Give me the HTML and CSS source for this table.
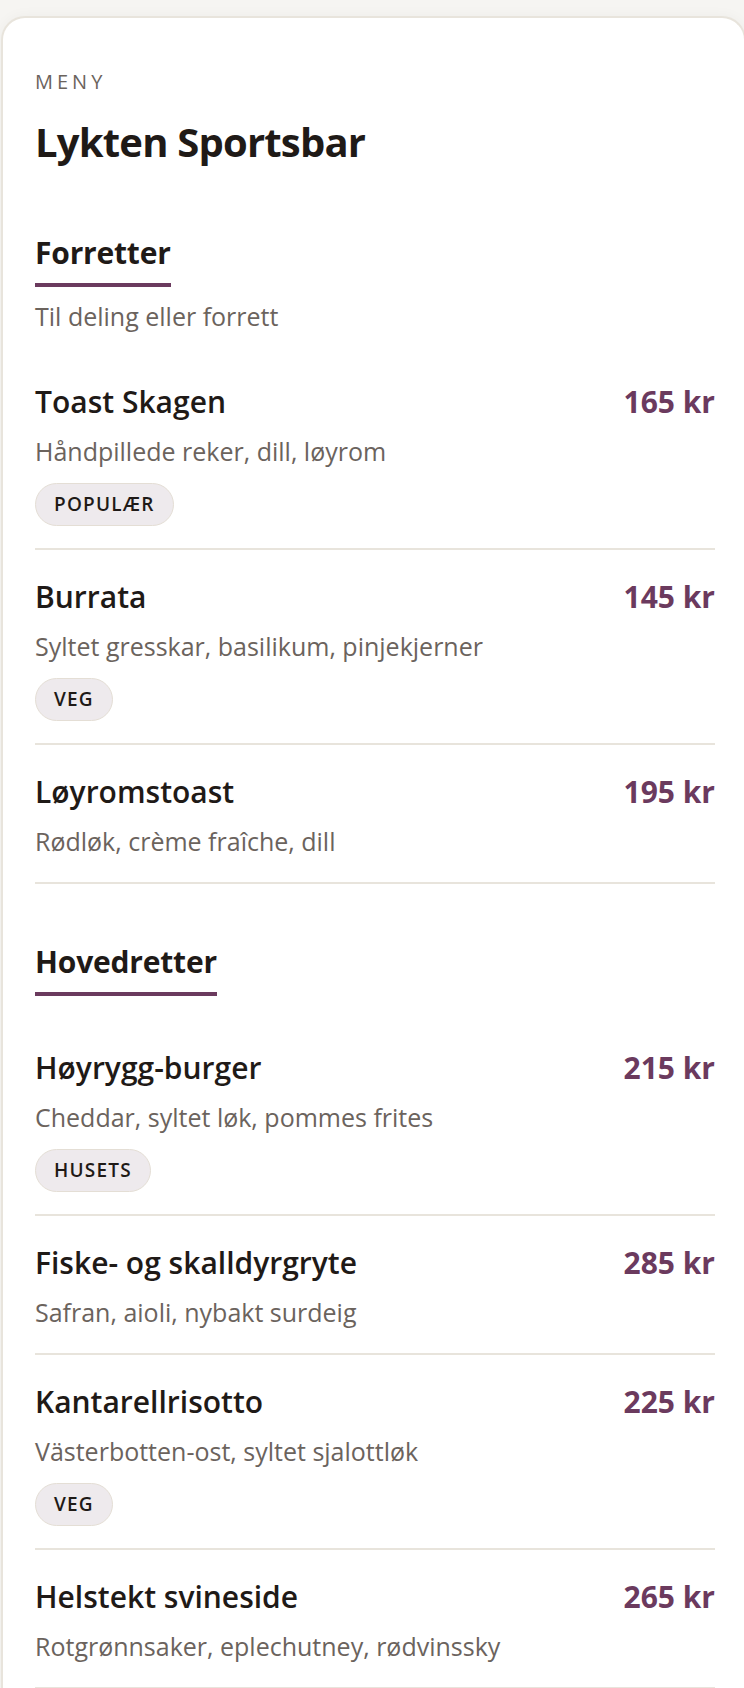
FILE: index.html
```html
<!DOCTYPE html>
<html lang="no">
<head>
    <meta charset="UTF-8">
    <meta name="viewport" content="width=device-width, initial-scale=1.0">
    <title>Meny - Lykten Sportsbar</title>
    <link rel="stylesheet" href="styles.css">
</head>
<body>

<div class="card">
    <div class="eyebrow">MENY</div>
    <h1>Lykten Sportsbar</h1>

    <section class="section">
        <div class="section-head">
            <h2>Forretter</h2>
            <p class="section-sub">Til deling eller forrett</p>
        </div>
        <div class="item">
            <div class="item-row">
                <span class="item-name">Toast Skagen</span>
                <span class="item-price">165 kr</span>
            </div>
            <p class="item-desc">Håndpillede reker, dill, løyrom</p>
            <span class="tag">POPULÆR</span>
        </div>
        <div class="item">
            <div class="item-row">
                <span class="item-name">Burrata</span>
                <span class="item-price">145 kr</span>
            </div>
            <p class="item-desc">Syltet gresskar, basilikum, pinjekjerner</p>
            <span class="tag">VEG</span>
        </div>
        <div class="item">
            <div class="item-row">
                <span class="item-name">Løyromstoast</span>
                <span class="item-price">195 kr</span>
            </div>
            <p class="item-desc">Rødløk, crème fraîche, dill</p>
        </div>
    </section>

    <section class="section">
        <div class="section-head">
            <h2>Hovedretter</h2>
        </div>
        <div class="item">
            <div class="item-row">
                <span class="item-name">Høyrygg-burger</span>
                <span class="item-price">215 kr</span>
            </div>
            <p class="item-desc">Cheddar, syltet løk, pommes frites</p>
            <span class="tag">HUSETS</span>
        </div>
        <div class="item">
            <div class="item-row">
                <span class="item-name">Fiske- og skalldyrgryte</span>
                <span class="item-price">285 kr</span>
            </div>
            <p class="item-desc">Safran, aioli, nybakt surdeig</p>
        </div>
        <div class="item">
            <div class="item-row">
                <span class="item-name">Kantarellrisotto</span>
                <span class="item-price">225 kr</span>
            </div>
            <p class="item-desc">Västerbotten-ost, syltet sjalottløk</p>
            <span class="tag">VEG</span>
        </div>
        <div class="item">
            <div class="item-row">
                <span class="item-name">Helstekt svineside</span>
                <span class="item-price">265 kr</span>
            </div>
            <p class="item-desc">Rotgrønnsaker, eplechutney, rødvinssky</p>
        </div>
    </section>
</div>

</body>
</html>
```

FILE: styles.css
```css
body {
    font-family: 'Open Sans', 'Noto Sans', sans-serif;
    background: #f6f5f2;
    color: #1f1a17;
    margin: 0;
    padding-top: 16px;
    overflow: hidden;
}
.card {
    width: 745px;
    box-sizing: border-box;
    margin-left: 1px;
    background: #fff;
    border: 2px solid #e8e4dc;
    border-bottom: none;
    border-radius: 24px 24px 0 0;
    box-shadow: 0 0 14px rgba(0, 0, 0, 0.04);
    padding: 52px 29px 0 32px;
}
.eyebrow {
    font-size: 20px;
    line-height: 24px;
    letter-spacing: 4px;
    color: #6b635d;
}
h1 {
    font-size: 40px;
    line-height: 50px;
    font-weight: 700;
    letter-spacing: -0.8px;
    margin: 23px 0 0;
}
.section {
    margin-top: 59px;
}
.section:first-of-type {
    margin-top: 67px;
}
.section-head {
    margin-bottom: 25px;
}
h2 {
    display: inline-block;
    font-size: 30px;
    line-height: 38px;
    font-weight: 700;
    letter-spacing: -0.2px;
    margin: 0;
    padding-bottom: 11px;
    border-bottom: 4px solid #6b3a5e;
}
.section-sub {
    font-size: 25px;
    line-height: 28px;
    color: #6b635d;
    margin: 15px 0 0;
}
.item {
    display: flex;
    flex-direction: column;
    align-items: flex-start;
    padding: 28px 0 25px;
    border-bottom: 2px solid #e8e4dc;
}
.item-row {
    align-self: stretch;
    display: flex;
    justify-content: space-between;
    align-items: baseline;
}
.item-name {
    font-size: 30px;
    line-height: 38px;
    font-weight: 600;
}
.item-price {
    font-size: 30px;
    line-height: 38px;
    font-weight: 700;
    color: #6b3a5e;
}
.item-desc {
    font-size: 25px;
    line-height: 32px;
    color: #6b635d;
    margin: 14px 0 0;
}
.tag {
    margin: 16px 0 -3px;
    padding: 0 18px;
    height: 41px;
    line-height: 41px;
    font-size: 19px;
    font-weight: 600;
    letter-spacing: 1.2px;
    background: #eeeaed;
    border: 1px solid #e4ded5;
    border-radius: 22px;
}
```
